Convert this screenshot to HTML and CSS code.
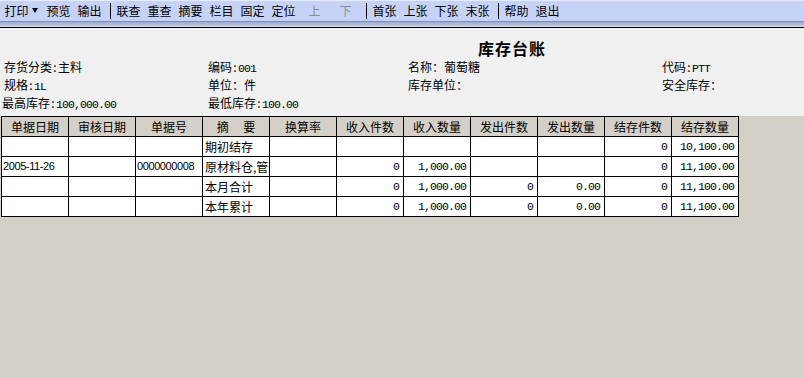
FILE: index.html
```html
<!DOCTYPE html>
<html lang="zh-CN">
<head>
    <meta charset="UTF-8">
    <meta name="viewport" content="width=device-width, initial-scale=1.0">
    <title>库存台账</title>
    <link rel="stylesheet" href="styles.css">
</head>
<body>
    <div class="toolbar">
        <span class="tb-btn">打印</span><span class="tb-arrow"><i></i></span>
        <span class="tb-btn">预览</span>
        <span class="tb-btn">输出</span>
        <span class="tb-sep"></span>
        <span class="tb-btn">联查</span>
        <span class="tb-btn">重查</span>
        <span class="tb-btn">摘要</span>
        <span class="tb-btn">栏目</span>
        <span class="tb-btn">固定</span>
        <span class="tb-btn">定位</span>
        <span class="tb-btn disabled">上</span>
        <span class="tb-btn disabled">下</span>
        <span class="tb-sep"></span>
        <span class="tb-btn">首张</span>
        <span class="tb-btn">上张</span>
        <span class="tb-btn">下张</span>
        <span class="tb-btn">末张</span>
        <span class="tb-sep"></span>
        <span class="tb-btn">帮助</span>
        <span class="tb-btn">退出</span>
    </div>
    <div class="toolbar-edge"></div>

    <div class="report-head">
        <div class="report-title">库存台账</div>
        <div>存货分类<span class="colon">:</span>主料</div>
        <div>编码<span class="colon">:</span><span class="num">001</span></div>
        <div>名称：葡萄糖</div>
        <div>代码<span class="colon">:</span><span class="num">PTT</span></div>
        <div>规格<span class="colon">:</span><span class="num">1L</span></div>
        <div>单位：件</div>
        <div>库存单位：</div>
        <div>安全库存：</div>
        <div class="shift">最高库存<span class="colon">:</span><span class="num">100,000.00</span></div>
        <div>最低库存<span class="colon">:</span><span class="num">100.00</span></div>
    </div>

    <div class="report-body">
        <table class="ledger">
            <thead>
                <tr>
                    <th>单据日期</th>
                    <th>审核日期</th>
                    <th>单据号</th>
                    <th>摘　 要</th>
                    <th>换算率</th>
                    <th>收入件数</th>
                    <th>收入数量</th>
                    <th>发出件数</th>
                    <th>发出数量</th>
                    <th>结存件数</th>
                    <th>结存数量</th>
                </tr>
            </thead>
            <tbody>
                <tr>
                    <td></td><td></td><td></td>
                    <td>期初结存</td>
                    <td></td><td></td><td></td><td></td><td></td>
                    <td class="num">0</td>
                    <td class="num">10,100.00</td>
                </tr>
                <tr>
                    <td class="code">2005-11-26</td>
                    <td></td>
                    <td class="code">0000000008</td>
                    <td>原材料仓,管理部</td>
                    <td></td>
                    <td class="num">0</td>
                    <td class="num">1,000.00</td>
                    <td></td><td></td>
                    <td class="num">0</td>
                    <td class="num">11,100.00</td>
                </tr>
                <tr>
                    <td></td><td></td><td></td>
                    <td>本月合计</td>
                    <td></td>
                    <td class="num">0</td>
                    <td class="num">1,000.00</td>
                    <td class="num">0</td>
                    <td class="num">0.00</td>
                    <td class="num">0</td>
                    <td class="num">11,100.00</td>
                </tr>
                <tr>
                    <td></td><td></td><td></td>
                    <td>本年累计</td>
                    <td></td>
                    <td class="num">0</td>
                    <td class="num">1,000.00</td>
                    <td class="num">0</td>
                    <td class="num">0.00</td>
                    <td class="num">0</td>
                    <td class="num">11,100.00</td>
                </tr>
            </tbody>
        </table>
    </div>
</body>
</html>
```

FILE: styles.css
```css
* {
    margin: 0;
    padding: 0;
    box-sizing: border-box;
}

html, body {
    height: 100%;
}

body {
    font-family: "Noto Sans CJK SC", "Liberation Sans", sans-serif;
    font-size: 12px;
    color: #000;
    background-color: #d4d0c8;
    display: flex;
    flex-direction: column;
    overflow: hidden;
}

/* toolbar */
.toolbar {
    display: flex;
    align-items: center;
    height: 21px;
    line-height: 21px;
    padding-left: 1px;
    background: linear-gradient(#e6ecfc 0, #e6ecfc 1px, #c6d3f7 1px);
    white-space: nowrap;
}

.tb-btn {
    width: 31px;
    text-align: center;
    cursor: default;
}

.tb-btn.disabled {
    color: #8c8c8c;
}

.tb-arrow {
    width: 11px;
    height: 21px;
    display: flex;
    align-items: center;
}

.tb-arrow i {
    width: 0;
    height: 0;
    border-left: 3px solid transparent;
    border-right: 3px solid transparent;
    border-top: 5px solid #000;
    margin-top: -1px;
}

.tb-sep {
    width: 8px;
    height: 16px;
    margin-top: 1px;
    background: linear-gradient(to right, transparent 5px, #000 5px, #000 6px, transparent 6px);
}

.toolbar-edge {
    height: 7px;
    background: linear-gradient(#7d8dc2 0, #7d8dc2 1px, #9eabd0 1px, #bcc5df 5px, #d8dcea 5px);
    border-bottom: 1px solid #000;
}

/* report header */
.report-head {
    background-color: #f0f0f0;
    padding: 11px 0 4px 4px;
    display: grid;
    grid-template-columns: 204px 200px 254px 1fr;
    grid-template-rows: 19px;
    grid-auto-rows: 18px;
    line-height: 18px;
    white-space: nowrap;
}

.report-title {
    grid-column: 3 / 5;
    padding-left: 70px;
    font-size: 16px;
    font-weight: bold;
    line-height: 19px;
    letter-spacing: 1px;
}

.shift {
    margin-left: -2px;
}

.colon {
    display: inline-block;
    width: 6px;
    text-align: center;
}

.num {
    font-family: "Liberation Mono", monospace;
    font-size: 11.5px;
    letter-spacing: -0.9px;
}

/* ledger table */
.report-body {
    flex: 1;
    padding-left: 1px;
    background-color: #d4d0c8;
}

.ledger {
    table-layout: fixed;
    border-collapse: separate;
    border-spacing: 0;
    width: 738px;
    border-top: 1px solid #000;
    border-left: 1px solid #000;
}

.ledger th,
.ledger td {
    width: 67px;
    height: 20px;
    line-height: 19px;
    border-right: 1px solid #000;
    border-bottom: 1px solid #000;
    overflow: hidden;
    white-space: nowrap;
    font-weight: normal;
}

.ledger th {
    background-color: #d4d0c8;
    text-align: center;
}

.ledger td {
    background-color: #fff;
    padding: 0 2px;
    text-align: left;
}

.ledger td.num {
    text-align: right;
    padding-right: 4px;
}

.ledger td.code {
    font-family: "Liberation Sans", sans-serif;
    font-size: 11px;
    letter-spacing: -0.4px;
    padding-left: 1px;
}
```
